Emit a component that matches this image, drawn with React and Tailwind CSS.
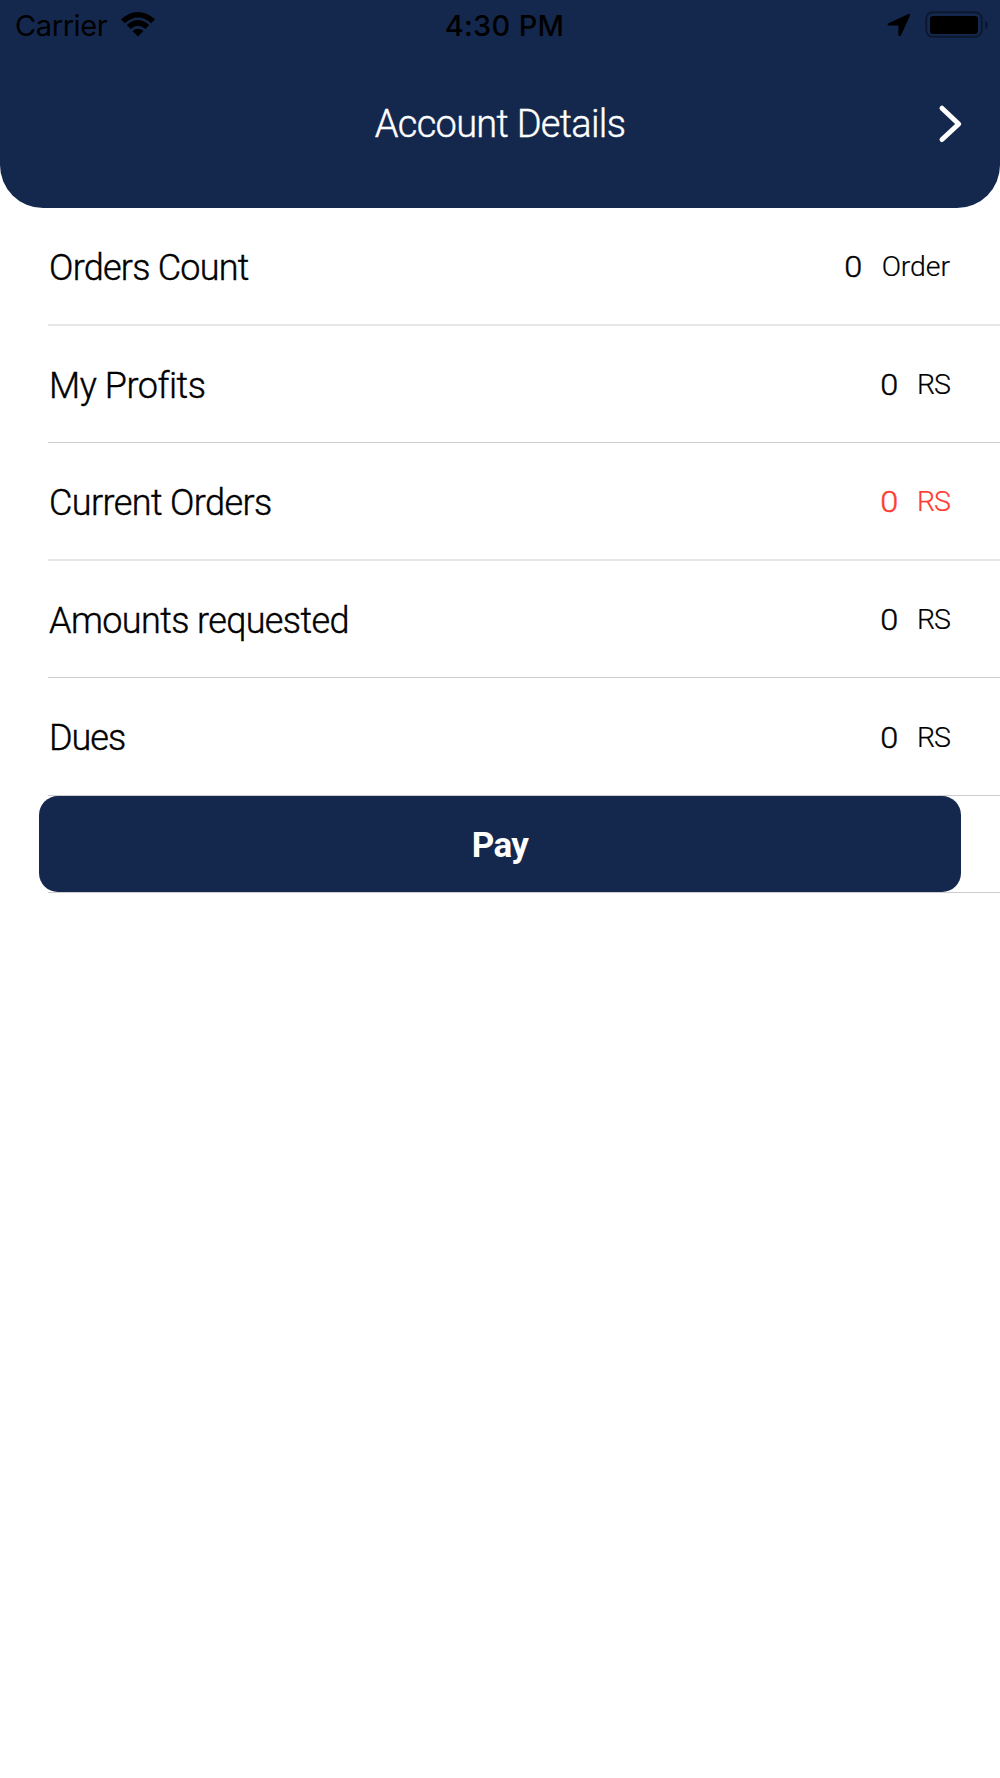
const rows = [
  { label: 'Orders Count', value: '0', unit: 'Order', line: 'h-[2px] bg-[#e7e7e8]', height: 'h-[118px]', track: 'tracking-[-0.75px]', unitTrack: 'tracking-[-0.1px]' },
  { label: 'My Profits', value: '0', unit: 'RS', line: 'h-px bg-[#cdcdcf]', height: 'h-[117px]', track: 'tracking-[-0.45px]', unitTrack: 'tracking-[-1px]' },
  { label: 'Current Orders', value: '0', unit: 'RS', line: 'h-[2px] bg-[#e7e7e8]', height: 'h-[118px]', track: 'tracking-[-0.6px]', unitTrack: 'tracking-[-1px]', red: true },
  { label: 'Amounts requested', value: '0', unit: 'RS', line: 'h-px bg-[#cdcdcf]', height: 'h-[117px]', track: 'tracking-[-0.6px]', unitTrack: 'tracking-[-1px]' },
  { label: 'Dues', value: '0', unit: 'RS', line: 'h-px bg-[#cdcdcf]', height: 'h-[118px]', track: 'tracking-[-1px]', unitTrack: 'tracking-[-1px]' },
];

function StatusBar() {
  return (
    <div className="grid h-[50px] grid-cols-3 items-center font-['Inter',sans-serif] text-[29px] leading-[50px] text-black">
      <div className="flex items-center pl-[15px] pt-px">
        <span className="w-[106px] tracking-[-0.4px]">Carrier</span>
        <svg width="34" height="25" viewBox="0 0 34 25" className="mb-[3px]">
          <path d="M0 7.3Q17-7.2 34 7.3L30.2 11.2Q17 0 3.8 11.2Z" />
          <path d="M5.8 13.1Q17 2.9 28.2 13.1L24.4 17Q17 10.6 9.6 17Z" />
          <path d="M11.6 19Q17 14.6 22.4 19L17 24.5Z" />
        </svg>
      </div>
      <div className="text-center">
        <span className="ml-[9px] whitespace-nowrap font-medium tracking-[0.3px]">4:30 PM</span>
      </div>
      <div className="flex items-center justify-end pr-[11px]">
        <svg width="24" height="24" viewBox="0 0 24 24" className="mb-px mr-[14px]">
          <path d="M1.5 10.2 21 1.2Q23.6.5 22.8 3L14 22.3Q12.2 24.5 11.4 22V13.3Q11.4 12.6 10.7 12.6H2Q-.6 11.8 1.5 10.2Z" />
        </svg>
        <svg width="64" height="28" viewBox="0 0 64 28" className="mb-[2px]">
          <rect x="1.2" y="1.2" width="55.6" height="24.6" rx="6.5" fill="none" stroke="#0d1830" strokeWidth="2" />
          <rect x="5" y="5" width="48" height="18" rx="3" />
          <path d="M60 9.5Q63 11 63 14T60 18.5Z" fill="#0d1830" />
        </svg>
      </div>
    </div>
  );
}

function Header() {
  return (
    <header className="h-[208px] rounded-b-[43px] bg-[#14284e]">
      <StatusBar />
      <div className="grid h-[148px] grid-cols-[100px_1fr_100px] items-center">
        <h1 className="col-start-2 pt-px text-center text-[38px] font-light leading-[147px] tracking-[-0.7px] text-white [-webkit-text-stroke:0.4px]">Account Details</h1>
        <svg width="26" height="40" viewBox="0 0 26 40" className="ml-[37px]" fill="none" stroke="white" strokeWidth="5" strokeLinecap="round" strokeLinejoin="round">
          <path d="M5 4.2 21.7 20 5 35.5" />
        </svg>
      </div>
    </header>
  );
}

function Row({ label, value, unit, line, height, track, unitTrack, red }) {
  return (
    <div className={`flex flex-col pl-[48px] ${height}`}>
      <div className="flex min-h-0 flex-1 items-center justify-between pr-[50px] pt-[2px]">
        <span className={`pl-px pt-px text-[36px] font-light text-black [-webkit-text-stroke:0.4px] ${track}`}>{label}</span>
        <div className={`flex items-center font-light ${red ? 'text-[#ff3b30]' : 'text-black'}`}>
          <span className="mr-[19px] inline-block origin-right scale-x-110 text-[29.5px] leading-[36px] [-webkit-text-stroke:0.4px]">{value}</span>
          <span className={`text-[28.5px] leading-[36px] [-webkit-text-stroke:0.2px] ${unitTrack}`}>{unit}</span>
        </div>
      </div>
      <div className={line} />
    </div>
  );
}

export default function App() {
  return (
    <div className="h-[1778px] w-[1000px] overflow-hidden bg-white font-['Roboto',sans-serif]">
      <Header />
      <main>
        {rows.map((r) => <Row key={r.label} {...r} />)}
        <div className="flex h-[97px] flex-col">
          <button className="mx-[39px] h-[96px] rounded-[19px] bg-[#14284e] pt-[4px] text-[35px] font-bold tracking-[-0.7px] text-white">Pay</button>
          <div className="ml-[48px] h-px shrink-0 bg-[#cdcdcf]" />
        </div>
      </main>
    </div>
  );
}
